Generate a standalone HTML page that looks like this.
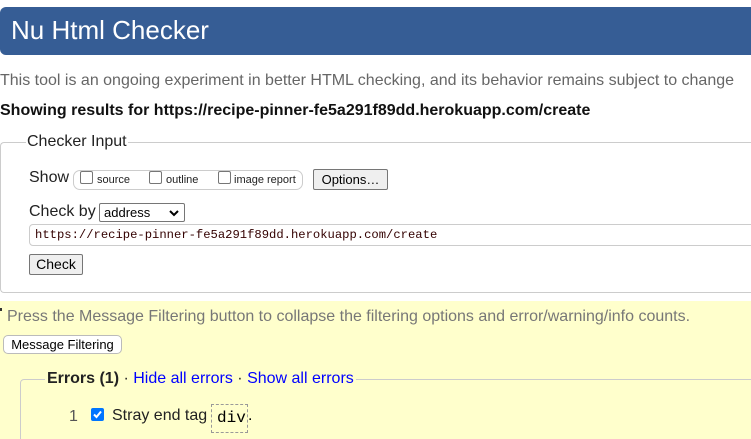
<!DOCTYPE html>
<html style="overflow:hidden;width:751px;height:439px"><head><style>
*{box-sizing:border-box;margin:0;padding:0}
body{width:751px;height:439px;overflow:hidden;background:#fff;font-family:"Liberation Sans",Arial,sans-serif;position:relative;color:#000}
.a{position:absolute;white-space:nowrap}
.hdr{left:0;top:7px;width:751px;height:48px;background:#365d95;border-radius:6px 0 0 6px}
.btn{position:absolute;background:#efefef;border:1px solid #767676;border-radius:2px;font-size:13px;text-align:center;color:#000}
.cb{position:absolute;width:13px;height:13px;border:1px solid #767676;border-radius:2px;background:#fff}
</style></head><body>
<div class="a hdr"></div>
<div class="a" style="left:11px;top:15px;font-size:26px;color:#fff">Nu Html Checker</div>
<div class="a" style="left:0;top:72px;font-size:16px;color:#666">This tool is an ongoing experiment in better HTML checking, and its behavior remains subject to change</div>
<div class="a" style="left:0;top:102px;font-size:16px;font-weight:bold;color:#111">Showing results for https://recipe-pinner-fe5a291f89dd.herokuapp.com/create</div>
<div class="a" style="left:0;top:142px;width:751px;height:151px;border:1px solid #ccc;border-right:none;border-radius:4px 0 0 4px"></div>
<div class="a" style="left:26px;top:133px;font-size:16px;background:#fff;padding:0 1px;color:#222">Checker Input</div>
<div class="a" style="left:29px;top:169px;font-size:16px;color:#222">Show</div>
<div class="a" style="left:73px;top:170px;width:230px;height:20px;border:1px solid #ccc;border-radius:7px"></div>
<div class="cb" style="left:80px;top:171px"></div><div class="a" style="left:97px;top:174px;font-size:11px;color:#222">source</div>
<div class="cb" style="left:149px;top:171px"></div><div class="a" style="left:166px;top:174px;font-size:11px;color:#222">outline</div>
<div class="cb" style="left:218px;top:171px"></div><div class="a" style="left:234px;top:174px;font-size:11px;color:#222">image report</div>
<div class="btn" style="left:313px;top:169px;width:75px;height:21px;line-height:19px">Options…</div>
<div class="a" style="left:29px;top:203px;font-size:16px;color:#222">Check by</div>
<div class="a" style="left:99px;top:203px;width:86px;height:19px;border:1px solid #767676;border-radius:2px;font-size:13px;padding-left:4px;line-height:17px">address<svg width="10" height="7" viewBox="0 0 10 7" style="position:absolute;right:5px;top:6px"><path d="M1 1L5 5L9 1" stroke="#000" stroke-width="2" fill="none"/></svg></div>
<div class="a" style="left:29px;top:224px;width:730px;height:22px;border:1px solid #ccc;border-radius:4px;font-family:'Liberation Mono',monospace;font-size:12.2px;padding-left:5px;line-height:20px;color:#300">https://recipe-pinner-fe5a291f89dd.herokuapp.com/create</div>
<div class="btn" style="left:29px;top:254px;width:54px;height:21px;line-height:19px;font-size:14px">Check</div>
<div class="a" style="left:0;top:301px;width:751px;height:138px;background:#ffffcc"></div>
<div class="a" style="left:0;top:308px;width:2px;height:3px;background:#333"></div>
<div class="a" style="left:7px;top:308px;font-size:16px;color:#777">Press the Message Filtering button to collapse the filtering options and error/warning/info counts.</div>
<div class="a" style="left:3px;top:335px;width:119px;height:19px;background:#fff;border:1px solid #bbb;border-radius:5px;font-size:13px;text-align:center;line-height:17px">Message Filtering</div>
<div class="a" style="left:20px;top:379px;width:740px;height:70px;border:1px solid #ccc;border-radius:4px 0 0 0"></div>
<div class="a" style="left:45px;top:370px;font-size:16px;background:#ffffcc;padding:0 2px;color:#222"><b>Errors (1)</b> · <span style="color:#00f">Hide all errors</span> · <span style="color:#00f">Show all errors</span></div>
<div class="a" style="left:69px;top:408px;font-size:16px;color:#555">1</div>
<div class="a" style="left:91px;top:408px;width:13px;height:13px;background:#0075ff;border-radius:2px"><svg width="13" height="13" viewBox="0 0 13 13" style="position:absolute;left:0;top:0"><path d="M3 6.5L5.5 9L10 3.5" stroke="#fff" stroke-width="2" fill="none"/></svg></div>
<div class="a" style="left:112px;top:407px;font-size:16px;color:#222">Stray end tag</div>
<div class="a" style="left:211px;top:404px;width:37px;height:29px;border:1px dashed #999;font-family:'Liberation Mono',monospace;font-size:16px;padding:4px 0 0 5px">div</div>
<div class="a" style="left:248px;top:407px;font-size:16px">.</div>
</body></html>
